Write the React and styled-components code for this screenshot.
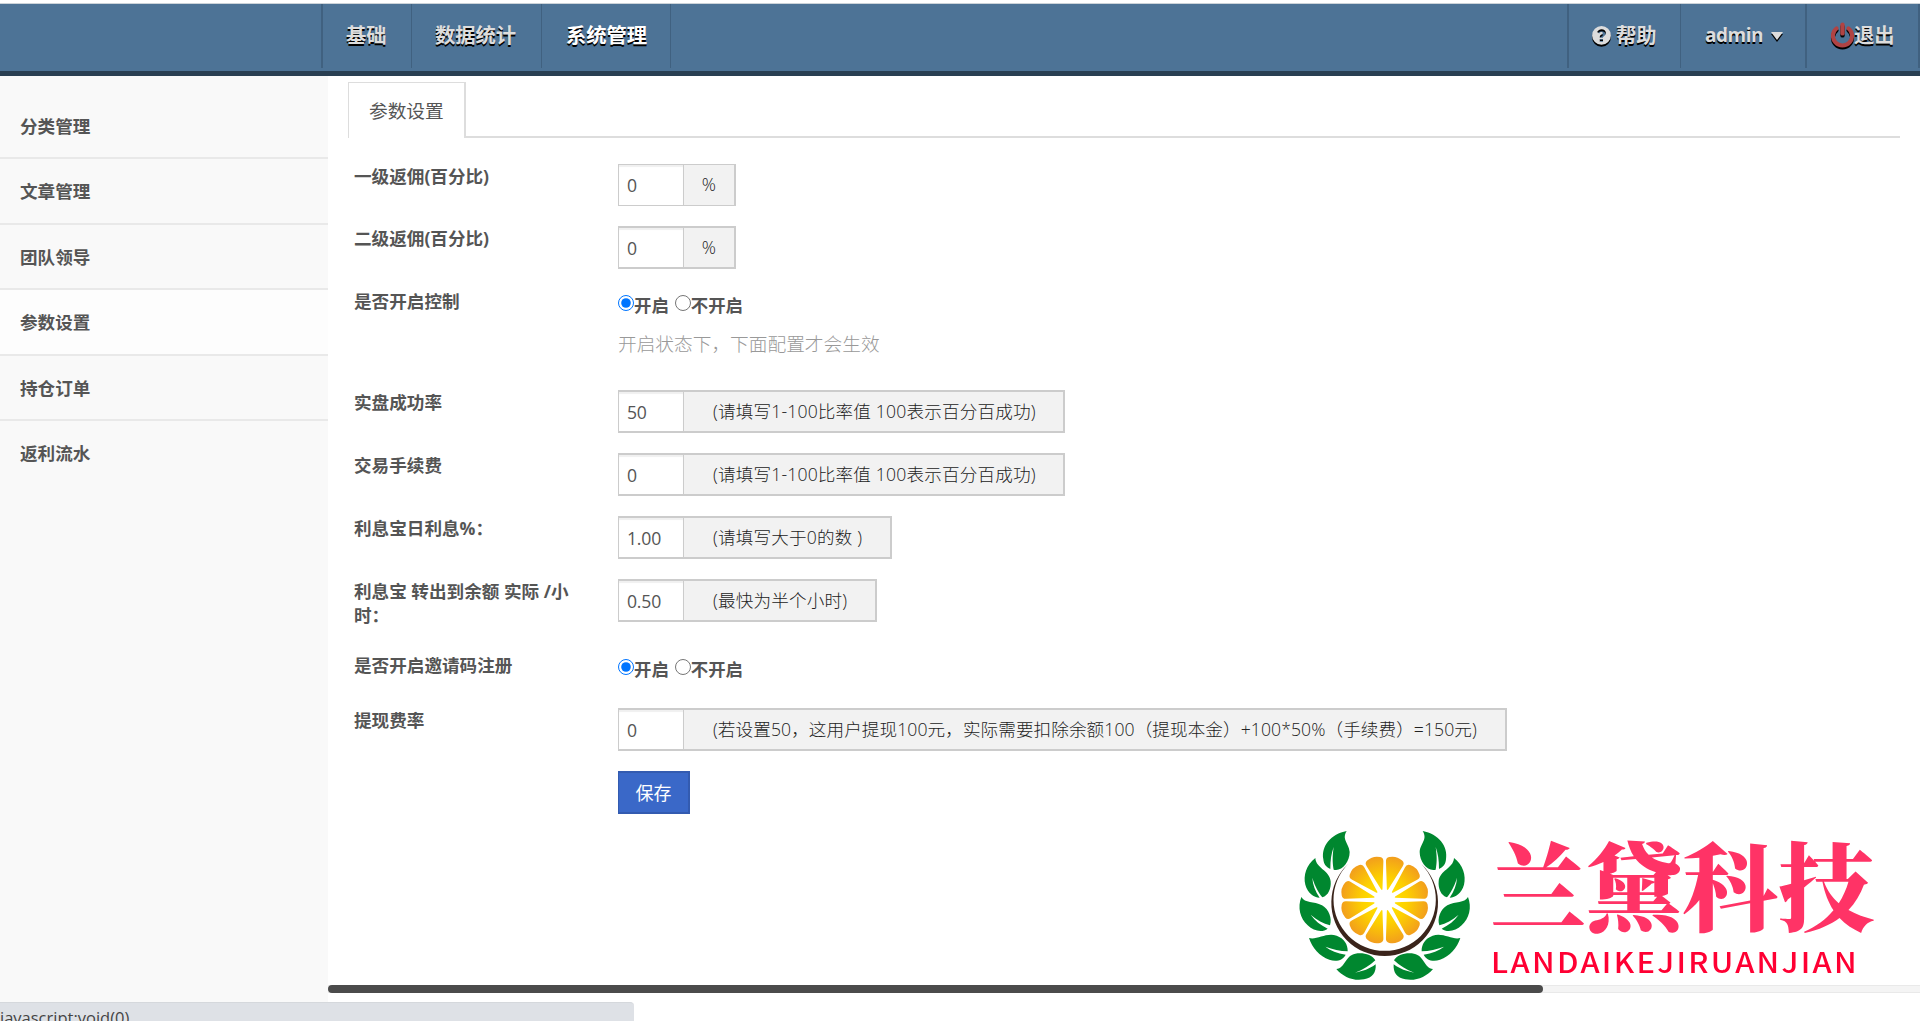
import React from "react";
import styled, { createGlobalStyle } from "styled-components";

const GlobalStyle = createGlobalStyle`
  * { box-sizing: border-box; }
  html, body { margin: 0; padding: 0; background: #fff; overflow: hidden; }
  body { font-family: "Open Sans", "Noto Sans CJK SC", sans-serif; font-size: 17.6px; color: #555; }
`;

const Page = styled.div`
  width: 1920px;
  height: 1021px;
  padding-top: 3px;
  display: flex;
  flex-direction: column;
  position: relative;
  overflow: hidden;
`;

const Header = styled.header`
  height: 73px;
  flex: none;
  display: flex;
  justify-content: space-between;
  align-items: flex-start;
  background: #4d7396;
  border-top: 1px solid #ccd3d9;
  border-bottom: 5px solid #293f52;
`;

const NavGroup = styled.nav`
  display: flex;
  height: 64px;
  padding-left: ${(p) => p.$offset || 0}px;
`;

const NavItem = styled.a`
  width: ${(p) => p.$width}px;
  display: flex;
  align-items: center;
  padding: 0 0 2px ${(p) => p.$pad}px;
  border-left: ${(p) => p.$line || 1}px solid #406180;
  border-right: ${(p) => p.$end || 0}px solid #406180;
  color: ${(p) => (p.$active ? "#fff" : "#ddd")};
  font-size: 20.3px;
  line-height: 30px;
  font-weight: 700;
  white-space: nowrap;
  text-shadow: 0 2px 0 #000;
`;

const NavSvg = styled.svg`
  flex: none;
  display: block;
  overflow: visible;
  margin-right: ${(p) => p.$gap || 0}px;
  margin-top: ${(p) => p.$drop || 0}px;
  filter: drop-shadow(0 2px 0 #000);
`;

const AdminName = styled.span`
  font-family: "Open Sans", sans-serif;
  font-size: 19px;
  font-weight: 700;
  letter-spacing: -0.5px;
  margin-right: 8px;
`;

const Body = styled.div`
  flex: 1;
  display: flex;
  min-height: 0;
`;

const Sidebar = styled.aside`
  width: 328px;
  flex: none;
  background: #f9f9f9;
  padding-top: 17.5px;
`;

const SideItem = styled.a`
  display: flex;
  align-items: center;
  height: 65.5px;
  padding: 0 0 ${(p) => (p.$last ? 2 : 0.5)}px 20px;
  border-bottom: ${(p) => (p.$last ? 0 : 2)}px solid #e9e9e9;
  background: ${(p) => (p.$active ? "#fdfdfd" : "transparent")};
  font-weight: 700;
  color: #555;
`;

const Main = styled.main`
  flex: 1;
  min-width: 0;
  display: flex;
  flex-direction: column;
`;

const Tabs = styled.div`
  height: 62px;
  margin: 0 20px;
  padding-top: 6px;
  display: flex;
  border-bottom: 2px solid #ddd;
`;

const Tab = styled.div`
  width: 118px;
  height: 56px;
  background: #fff;
  border: 1px solid #ddd;
  border-right-width: 2px;
  border-bottom: 0;
  padding: 1px 0 0 20px;
  font-size: 18.7px;
  line-height: 54px;
  white-space: nowrap;
`;

const Form = styled.form`
  padding: 26px 0 0 26px;
  height: 847px;
`;

const Row = styled.div`
  display: grid;
  grid-template-columns: 264px 1fr;
  align-items: start;
  height: ${(p) => p.$height}px;
`;

const Label = styled.label`
  width: 225px;
  font-weight: 700;
  line-height: 24.4px;
`;

const Group = styled.div`
  display: flex;
  width: ${(p) => p.$width}px;
  height: ${(p) => (p.$thin ? 42 : 43)}px;
  border: solid #ccc;
  border-width: ${(p) => (p.$thin ? 1 : 2)}px 2px ${(p) => (p.$thin ? 1 : 2)}px 1px;
`;

const Field = styled.input`
  width: 65px;
  height: 100%;
  border: 0;
  border-right: 1px solid #ccc;
  outline: 0;
  padding: 0 0 0 8px;
  background: #fff;
  color: #555;
  font: inherit;
  font-size: 17.6px;
  letter-spacing: -0.2px;
  box-shadow: inset 0 2px 1px #f0f0f0;
`;

const Addon = styled.span`
  flex: 1;
  display: flex;
  align-items: center;
  justify-content: ${(p) => (p.$center ? "center" : "flex-start")};
  padding: 0 0 2px ${(p) => (p.$center ? 0 : 29)}px;
  background: #f2f2f2;
  color: #222;
  font-weight: 300;
  font-size: 17.6px;
  letter-spacing: ${(p) => p.$spacing}px;
  white-space: pre;
`;

const Radios = styled.div`
  display: flex;
  align-items: center;
  height: 24px;
  margin-top: 2px;
  font-weight: 700;
  font-size: 17.4px;
`;

const Radio = styled.input`
  width: 16px;
  height: 16px;
  margin: 0;
  accent-color: #0075ff;
`;

const RadioText = styled.span`
  margin-right: 6px;
  padding-top: 3px;
`;

const Hint = styled.p`
  margin: 15px 0 0;
  font-size: 18.7px;
  line-height: 28px;
  font-weight: 300;
  color: #999;
`;

const Save = styled.button`
  width: 72px;
  height: 43px;
  border: solid #335bb0;
  border-width: 2px 2px 2px 1px;
  background: #3a68c8;
  color: #fff;
  font-family: inherit;
  font-size: 18px;
  padding: 0 0 2px;
`;

const ScrollTrack = styled.div`
  height: 8px;
  background: #f4f4f4;
  border: solid #e9e9e9;
  border-width: 1px 0;
`;

const ScrollThumb = styled.div`
  width: 1215px;
  height: 8px;
  margin-top: -1px;
  border-radius: 4px;
  background: #4b4b4b;
`;

const StatusBar = styled.div`
  position: absolute;
  left: 0;
  top: 1002px;
  width: 634px;
  height: 19px;
  background: #dee1e6;
  border-top: 1px solid #d5d8dc;
  border-radius: 0 4px 0 0;
  color: #444;
  font-size: 16.5px;
  line-height: 30px;
  overflow: hidden;
`;

const Brand = styled.div`
  position: absolute;
  left: 1280px;
  top: 810px;
  display: flex;
`;

const BrandWords = styled.div`
  width: 400px;
  margin-left: -10px;
  padding-top: 16px;
`;

const BrandName = styled.div`
  font-family: "Noto Serif CJK SC", "Noto Sans CJK SC", sans-serif;
  font-size: 96px;
  line-height: 112px;
  font-weight: 900;
  color: #ff3366;
  white-space: nowrap;
`;

const BrandLatin = styled.div`
  font-family: "Noto Sans CJK SC", sans-serif;
  font-size: 28px;
  font-weight: 500;
  line-height: 40px;
  margin: 3px 0 0 1px;
  letter-spacing: 2.1px;
  color: #ff0033;
  white-space: nowrap;
  transform: scaleX(1.1);
  transform-origin: 0 50%;
`;

const leaves = [
  {
    d: "M200 63C153 72 123 108 130 148C131 163 140 173 151 177C151 151 154 130 161 111C157 139 157 157 161 179C184 186 209 157 209 126C207 99 184 89 200 63Z",
  },
  {
    d: "M106 144C79 164 69 197 76 224C83 249 101 262 119 263C106 244 98 224 97 203C105 230 115 247 127 262C145 257 154 236 152 214C149 180 108 176 106 144Z",
  },
  {
    d: "M64 261C52 292 60 325 83 346C101 364 128 368 143 356C121 345 105 332 92 314C111 331 130 341 150 346C157 325 147 298 126 286C101 272 75 281 64 261Z",
  },
  {
    d: "M87 384C96 413 119 439 148 449C169 457 190 450 197 434C172 430 151 422 136 410C158 418 180 423 203 424C204 403 192 385 170 377C139 366 111 391 87 384Z",
  },
  {
    d: "M169 477C189 501 221 514 252 508C278 504 289 487 287 463C268 477 249 484 225 488C250 479 269 467 286 451C277 434 250 427 226 431C195 437 196 474 169 477Z",
  },
];

const segments = Array.from({ length: 12 }, (_, i) => 15 + i * 30);

function Wreath() {
  return (
    <svg width="220" height="190" viewBox="0 0 660 570">
      <defs>
        <radialGradient id="juice" gradientUnits="userSpaceOnUse" cx="0" cy="0" r="137">
          <stop offset="0.2" stopColor="#ffe000" />
          <stop offset="0.5" stopColor="#fdd000" />
          <stop offset="1" stopColor="#f19a1f" />
        </radialGradient>
      </defs>
      <g fill="#00872f">
        {leaves.map((l, i) => (
          <path key={i} d={l.d} />
        ))}
        <g transform="translate(628 0) scale(-1 1)">
          {leaves.map((l, i) => (
            <path key={i} d={l.d} />
          ))}
        </g>
      </g>
      <path
        fill="#3a241b"
        fillRule="evenodd"
        d="M205 161A160 160 0 1 0 423 161A153.5 153.5 0 1 1 205 161Z"
      />
      <g transform="translate(314 270)" fill="url(#juice)">
        {segments.map((a) => (
          <path
            key={a}
            transform={`rotate(${a})`}
            d="M33 -2Q29 0 33 2L112 26Q123 30 128 20Q138 0 128 -20Q123 -30 112 -26Z"
          />
        ))}
      </g>
    </svg>
  );
}

function HelpIcon() {
  return (
    <NavSvg $gap={5} width="19" height="19" viewBox="0 0 19 19">
      <path
        fill="#ddd"
        fillRule="evenodd"
        d="M9.5 0A9.4 9.4 0 1 1 9.5 18.8A9.4 9.4 0 0 1 9.5 0ZM5.1 6.1L7.2 7.6C8.1 6.3 8.6 6 9.4 6C10.2 6 10.8 6.5 10.8 7.1C10.8 8.5 7.8 8.8 7.8 11.1V11.7H11V11.3C11 10.2 13.9 9.7 13.9 6.9C13.9 4.6 11.9 3.2 9.6 3.2C7.6 3.2 6.1 4.2 5.1 6.1ZM7.8 12.9V15.7H11V12.9Z"
      />
    </NavSvg>
  );
}

function PowerIcon() {
  return (
    <NavSvg width="23" height="26" viewBox="0 0 23 26">
      <g fill="none" stroke="#b04343" strokeLinecap="round">
        <path strokeWidth="4" d="M5.6 6.4A9.6 9.6 0 1 0 17.4 6.4" />
        <path strokeWidth="4.4" d="M11.5 2.8V11.4" />
      </g>
    </NavSvg>
  );
}

function Choice({ name }) {
  return (
    <Radios>
      <Radio type="radio" name={name} defaultChecked />
      <RadioText>开启</RadioText>
      <Radio type="radio" name={name} />
      <RadioText>不开启</RadioText>
    </Radios>
  );
}

function NumberRow({ height, label, value, note, width, thin, center, spacing = 0.16 }) {
  return (
    <Row $height={height}>
      <Label>{label}</Label>
      <Group $width={width} $thin={thin}>
        <Field defaultValue={value} />
        <Addon $center={center} $spacing={spacing}>
          {note}
        </Addon>
      </Group>
    </Row>
  );
}

const sideItems = ["分类管理", "文章管理", "团队领导", "参数设置", "持仓订单", "返利流水"];

export default function App() {
  return (
    <Page>
      <GlobalStyle />
      <Header>
        <NavGroup $offset={321}>
          <NavItem $width={90} $pad={23} $line={2}>基础</NavItem>
          <NavItem $width={130} $pad={23}>数据统计</NavItem>
          <NavItem $width={130} $pad={24} $end={1} $active>系统管理</NavItem>
        </NavGroup>
        <NavGroup>
          <NavItem $width={113} $pad={23} $line={2}>
            <HelpIcon />
            帮助
          </NavItem>
          <NavItem $width={125} $pad={24}>
            <AdminName>admin</AdminName>
            <NavSvg $drop={2} width="12" height="8" viewBox="0 0 12 8">
              <path fill="#ddd" d="M0 0H12L6 8Z" />
            </NavSvg>
          </NavItem>
          <NavItem $width={115} $pad={24} $line={2} $end={2}>
            <PowerIcon />
            退出
          </NavItem>
        </NavGroup>
      </Header>
      <Body>
        <Sidebar>
          {sideItems.map((t, i) => (
            <SideItem key={t} $active={i === 3} $last={i === 5}>
              {t}
            </SideItem>
          ))}
        </Sidebar>
        <Main>
          <Tabs>
            <Tab>参数设置</Tab>
          </Tabs>
          <Form>
            <NumberRow height={62} label="一级返佣(百分比)" value="0" note="%" width={118} thin center />
            <NumberRow height={63} label="二级返佣(百分比)" value="0" note="%" width={118} center />
            <Row $height={101}>
              <Label>是否开启控制</Label>
              <div>
                <Choice name="control" />
                <Hint>开启状态下，下面配置才会生效</Hint>
              </div>
            </Row>
            <NumberRow height={63} label="实盘成功率" value="50" note="(请填写1-100比率值 100表示百分百成功)" width={447} />
            <NumberRow height={63} label="交易手续费" value="0" note="(请填写1-100比率值 100表示百分百成功)" width={447} />
            <NumberRow height={63} label="利息宝日利息%：" value="1.00" note="(请填写大于0的数 )" width={274} />
            <NumberRow height={74} label="利息宝 转出到余额 实际 /小时：" value="0.50" note="(最快为半个小时)" width={259} />
            <Row $height={55}>
              <Label>是否开启邀请码注册</Label>
              <Choice name="invite" />
            </Row>
            <NumberRow
              height={63}
              label="提现费率"
              value="0"
              note="(若设置50，这用户提现100元，实际需要扣除余额100（提现本金）+100*50%（手续费）=150元)"
              width={889}
              spacing={0.08}
            />
            <Row $height={43}>
              <span />
              <Save type="button">保存</Save>
            </Row>
          </Form>
          <ScrollTrack>
            <ScrollThumb />
          </ScrollTrack>
        </Main>
      </Body>
      <Brand>
        <Wreath />
        <BrandWords>
          <BrandName>兰黛科技</BrandName>
          <BrandLatin>LANDAIKEJIRUANJIAN</BrandLatin>
        </BrandWords>
      </Brand>
      <StatusBar>javascript:void(0)</StatusBar>
    </Page>
  );
}
